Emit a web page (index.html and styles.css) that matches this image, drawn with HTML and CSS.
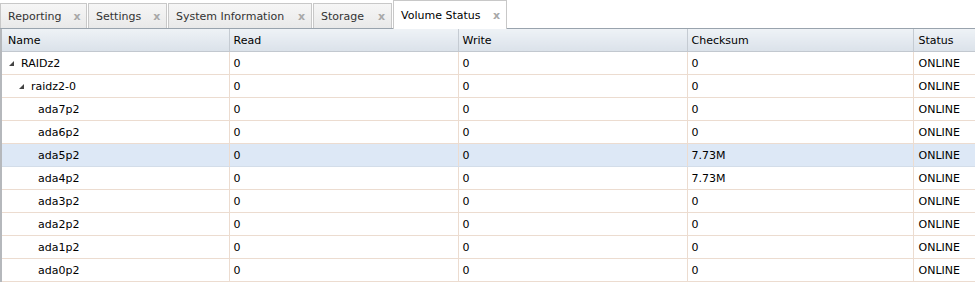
FILE: index.html
```html
<!DOCTYPE html>
<html lang="en">
<head>
  <meta charset="UTF-8" />
  <title>Volume Status</title>
  <link rel="stylesheet" href="styles.css">
</head>
<body>

  <!-- Tab strip -->
  <div class="tabs">
    <div class="tab">Reporting<span class="close">x</span></div>
    <div class="tab">Settings<span class="close">x</span></div>
    <div class="tab">System Information<span class="close">x</span></div>
    <div class="tab">Storage<span class="close">x</span></div>
    <div class="tab active">Volume Status<span class="close">x</span></div>
  </div>

  <!-- Volume grid -->
  <div class="grid">
    <table>
      <colgroup>
        <col class="c-name"><col class="c-read"><col class="c-write"><col class="c-sum"><col class="c-status">
      </colgroup>
      <thead>
        <tr><th>Name</th><th>Read</th><th>Write</th><th>Checksum</th><th>Status</th></tr>
      </thead>
      <tbody id="rows"></tbody>
    </table>
  </div>

  <script>
    const rows = [
      { name: "RAIDz2", level: 0, tree: true, sum: "0" },
      { name: "raidz2-0", level: 1, tree: true, sum: "0" },
      { name: "ada7p2", level: 2, sum: "0" },
      { name: "ada6p2", level: 2, sum: "0" },
      { name: "ada5p2", level: 2, sum: "7.73M", selected: true },
      { name: "ada4p2", level: 2, sum: "7.73M" },
      { name: "ada3p2", level: 2, sum: "0" },
      { name: "ada2p2", level: 2, sum: "0" },
      { name: "ada1p2", level: 2, sum: "0" },
      { name: "ada0p2", level: 2, sum: "0" }
    ];

    const tbody = document.getElementById("rows");
    rows.forEach(row => {
      const tr = document.createElement("tr");
      if (row.selected) tr.className = "selected";
      tr.innerHTML = `
        <td><span class="name lvl-${row.level}">${row.tree ? '<span class="arrow"></span>' : ''}${row.name}</span></td>
        <td>0</td>
        <td>0</td>
        <td>${row.sum}</td>
        <td>ONLINE</td>
      `;
      tbody.appendChild(tr);
    });
  </script>
</body>
</html>
```

FILE: styles.css
```css
body {
  margin: 0;
  font-family: "DejaVu Sans", Verdana, sans-serif;
  font-size: 11px;
  color: #000;
  background-color: #fff;
  overflow: hidden;
}

.tabs {
  display: flex;
  align-items: flex-end;
  gap: 1px;
  height: 28px;
  border-bottom: 1px solid #99a3ad;
}

.tab {
  display: flex;
  align-items: center;
  height: 24px;
  padding: 0 6px 0 7px;
  border: 1px solid #c8c8c8;
  border-bottom: none;
  background: linear-gradient(#f6f6f6, #e9e9e9);
  color: #333;
}

.tab .close {
  margin-left: auto;
  padding-left: 12px;
  font-weight: bold;
  font-size: 11px;
  color: #a8a8a8;
}

.tab:nth-child(1) { width: 72px; }
.tab:nth-child(2) { width: 64px; }
.tab:nth-child(3) { width: 129px; }
.tab:nth-child(4) { width: 64px; }

.tab.active {
  width: 99px;
  height: 28px;
  margin-bottom: -1px;
  background: #fff;
  color: #000;
}

.grid {
  border-left: 2px solid #b5b8bc;
}

table {
  width: 973px;
  border-collapse: collapse;
  table-layout: fixed;
}

.c-name { width: 227px; }
.c-read, .c-write { width: 229px; }
.c-sum { width: 226px; }

th {
  height: 22px;
  padding: 0 4px;
  text-align: left;
  font-weight: normal;
  background: linear-gradient(#eef2f6, #dbe2ea);
  border-right: 1px solid #c5cbd2;
  border-bottom: 1px solid #c2c8cf;
}

td {
  height: 22px;
  padding: 0 4px;
  border-right: 1px solid #ecdcd0;
  border-bottom: 1px solid #ecdcd0;
  white-space: nowrap;
}

th:first-child, td:first-child {
  padding-left: 6px;
}

th:last-child, td:last-child {
  border-right: none;
  padding-left: 5px;
}

tr.selected td {
  background-color: #dde8f6;
  border-bottom-color: #d3dde9;
}

.name {
  display: inline-flex;
  align-items: center;
}

.lvl-0 { padding-left: 1px; }
.lvl-1 { padding-left: 11px; }
.lvl-2 { padding-left: 30px; }

.arrow {
  width: 0;
  height: 0;
  margin-right: 7px;
  border-left: 5px solid transparent;
  border-bottom: 5px solid #444;
}
```
